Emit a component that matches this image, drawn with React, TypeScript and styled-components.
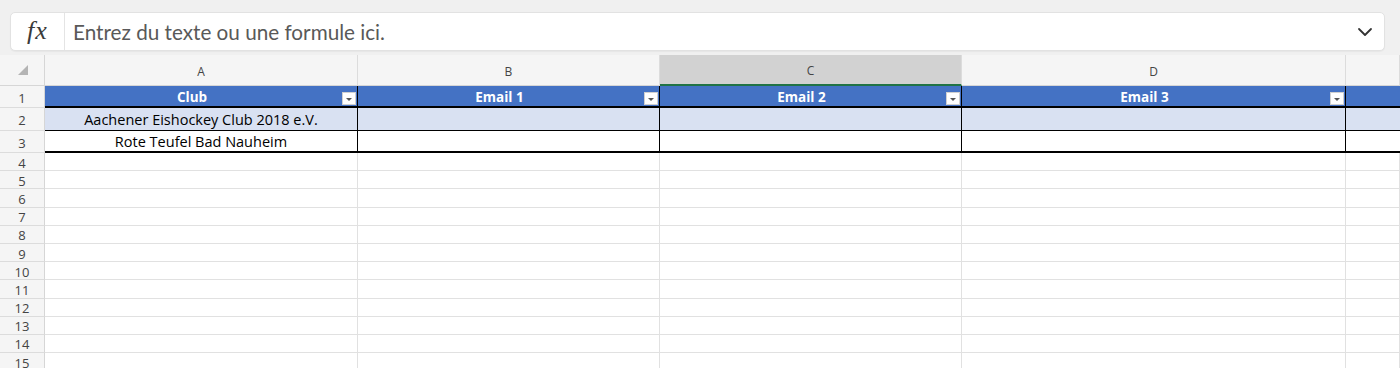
import React from "react";
import styled, { createGlobalStyle, css } from "styled-components";

const GlobalStyle = createGlobalStyle`
  html, body { margin: 0; padding: 0; background: #ffffff; }
  body { font-family: "Open Sans", "Noto Sans", sans-serif; overflow: hidden; }
`;

const Page = styled.div`
  width: 1400px;
  height: 368px;
  overflow: hidden;
  background: #ffffff;
`;

const FormulaArea = styled.div`
  height: 55px;
  box-sizing: border-box;
  background: #f0f0f0;
  padding: 12px 15px 4px 10px;
`;

const FormulaBox = styled.div`
  display: flex;
  align-items: center;
  height: 39px;
  box-sizing: border-box;
  background: #ffffff;
  border: 1px solid #e2e2e2;
  border-radius: 5px;
  box-shadow: 0 1px 1px rgba(0, 0, 0, 0.04);
`;

const FxLabel = styled.div`
  width: 54px;
  height: 100%;
  display: flex;
  align-items: center;
  justify-content: center;
  border-right: 1px solid #e4e4e4;
  font-family: "Liberation Serif", serif;
  font-style: italic;
  font-size: 26px;
  color: #3a3a3a;
  letter-spacing: 1px;
  padding-bottom: 2px;
  box-sizing: border-box;
`;

const FormulaText = styled.div`
  flex: 1;
  padding-left: 8px;
  font-family: "Lato", "Noto Sans", sans-serif;
  font-size: 20.7px;
  color: #595959;
`;

const ChevronWrap = styled.div`
  width: 38px;
  display: flex;
  align-items: center;
  justify-content: center;
  color: #333333;
`;

const Sheet = styled.div`
  display: grid;
  grid-template-columns: 45px 313px 302px 302px 384px 54px;
  grid-template-rows: 31px 22px 23px 22px repeat(12, 18.2px);
`;

type Kind = "corner" | "colhead" | "rowhead" | "head" | "band" | "plain" | "empty";

interface CellProps {
  $kind: Kind;
  $selected?: boolean;
  $last?: boolean;
}

const Cell = styled.div<CellProps>`
  position: relative;
  box-sizing: border-box;
  display: flex;
  align-items: center;
  justify-content: center;
  overflow: hidden;
  white-space: nowrap;
  font-size: 14.5px;
  color: #000000;
  border-right: 1px solid #e1e1e1;
  border-bottom: 1px solid #e1e1e1;

  ${(p) =>
    p.$kind === "corner" &&
    css`
      background: #f5f5f5;
      border-right: 1px solid #d6d6d6;
      border-bottom: 1px solid #d6d6d6;
    `}
  ${(p) =>
    p.$kind === "colhead" &&
    css`
      background: ${p.$selected ? "#d2d2d2" : "#f5f5f5"};
      border-right: 1px solid #dcdcdc;
      border-bottom: ${p.$selected ? "2px solid #217346" : "1px solid #d6d6d6"};
      font-size: 12px;
      color: #444444;
      padding-top: 2px;
    `}
  ${(p) =>
    p.$kind === "rowhead" &&
    css`
      background: #f5f5f5;
      border-right: 1px solid #d6d6d6;
      border-bottom: 1px solid #dcdcdc;
      font-size: 13px;
      color: #444444;
      padding-top: 2px;
    `}
  ${(p) =>
    p.$kind === "head" &&
    css`
      background: #4472c4;
      color: #ffffff;
      font-weight: 700;
      font-size: 13.5px;
      padding-right: 18px;
      padding-top: 1px;
      border-right: ${p.$last ? "none" : "1px solid #000000"};
      border-bottom: 2px solid #000000;
    `}
  ${(p) =>
    p.$kind === "band" &&
    css`
      background: #d9e1f2;
      border-right: ${p.$last ? "none" : "1px solid #000000"};
      border-bottom: 1px solid #000000;
    `}
  ${(p) =>
    p.$kind === "plain" &&
    css`
      background: #ffffff;
      border-right: ${p.$last ? "none" : "1px solid #000000"};
      border-bottom: 2px solid #000000;
      padding-top: 1px;
    `}
`;

const FilterButton = styled.div`
  position: absolute;
  right: 1px;
  bottom: 1px;
  width: 14px;
  height: 13px;
  box-sizing: border-box;
  background: #ffffff;
  border: 1px solid #d0d0d0;
  display: flex;
  align-items: center;
  justify-content: center;
`;

const FilterArrow = styled.span`
  width: 0;
  height: 0;
  border-left: 3px solid transparent;
  border-right: 3px solid transparent;
  border-top: 3px solid #555555;
  margin-top: 1px;
`;

const SelectAll = styled.span`
  width: 0;
  height: 0;
  border-left: 10px solid transparent;
  border-bottom: 10px solid #b4b4b4;
  margin-left: 2px;
`;

const columns = ["A", "B", "C", "D", ""];
const headers = ["Club", "Email 1", "Email 2", "Email 3", ""];
const clubs = ["Aachener Eishockey Club 2018 e.V.", "Rote Teufel Bad Nauheim"];

const Chevron = () => (
  <svg width="16" height="10" viewBox="0 0 16 10" fill="none">
    <path d="M2 2l6 6 6-6" stroke="currentColor" strokeWidth="1.8" strokeLinecap="round" strokeLinejoin="round" />
  </svg>
);

export default function App() {
  const emptyRows = Array.from({ length: 12 }, (_, i) => i + 4);
  return (
    <Page>
      <GlobalStyle />
      <FormulaArea>
        <FormulaBox>
          <FxLabel>fx</FxLabel>
          <FormulaText>Entrez du texte ou une formule ici.</FormulaText>
          <ChevronWrap>
            <Chevron />
          </ChevronWrap>
        </FormulaBox>
      </FormulaArea>
      <Sheet>
        <Cell $kind="corner">
          <SelectAll />
        </Cell>
        {columns.map((c, i) => (
          <Cell key={"c" + i} $kind="colhead" $selected={c === "C"}>
            {c}
          </Cell>
        ))}

        <Cell $kind="rowhead">1</Cell>
        {headers.map((h, i) => (
          <Cell key={"h" + i} $kind="head" $last={i === 4}>
            {h}
            {i < 4 && (
              <FilterButton>
                <FilterArrow />
              </FilterButton>
            )}
          </Cell>
        ))}

        {clubs.map((club, r) => (
          <React.Fragment key={"r" + r}>
            <Cell $kind="rowhead">{r + 2}</Cell>
            {columns.map((_, i) => (
              <Cell key={"d" + r + i} $kind={r === 0 ? "band" : "plain"} $last={i === 4}>
                {i === 0 ? club : ""}
              </Cell>
            ))}
          </React.Fragment>
        ))}

        {emptyRows.map((n) => (
          <React.Fragment key={"e" + n}>
            <Cell $kind="rowhead">{n}</Cell>
            {columns.map((_, i) => (
              <Cell key={"e" + n + i} $kind="empty" />
            ))}
          </React.Fragment>
        ))}
      </Sheet>
    </Page>
  );
}
